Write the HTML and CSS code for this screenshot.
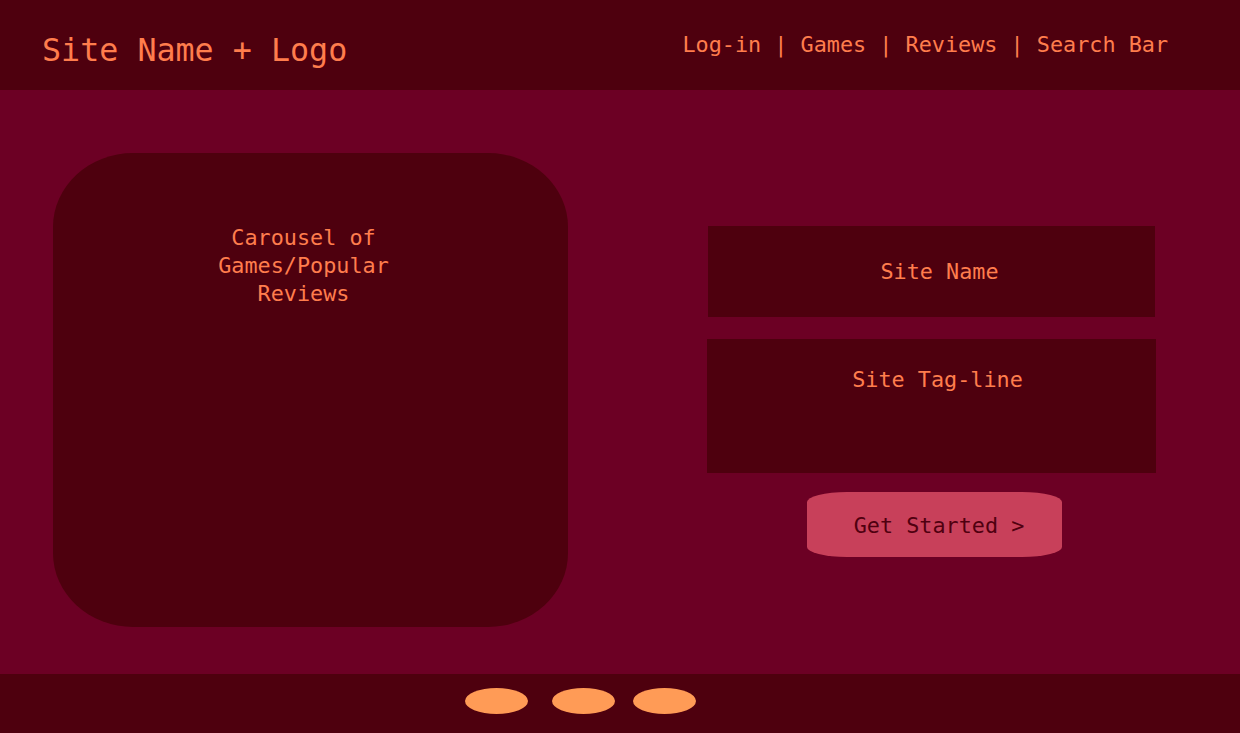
FILE: index.html
```html
<!DOCTYPE html>
<html lang="en">
<head>
<meta charset="utf-8">
<title>Site Name</title>
<link rel="stylesheet" href="styles.css">
</head>
<body>
<div class="page">
  <header class="header">
    <div class="brand">Site Name + Logo</div>
    <nav class="nav">Log-in | Games | Reviews | Search Bar</nav>
  </header>
  <main class="main">
    <section class="carousel">
      <p class="carousel-text">Carousel of Games/Popular Reviews</p>
    </section>
    <section class="hero">
      <div class="hero-name">Site Name</div>
      <div class="hero-tagline">Site Tag-line</div>
      <button class="cta">Get Started &gt;</button>
    </section>
  </main>
  <footer class="footer">
    <span class="dot"></span>
    <span class="dot dot-2"></span>
    <span class="dot dot-3"></span>
  </footer>
</div>
</body>
</html>
```
FILE: styles.css
```css
* { box-sizing: border-box; }
html, body { margin: 0; padding: 0; }
body {
  font-family: "DejaVu Sans Mono", "Liberation Mono", monospace;
  color: #ff7d4d;
  background: #6c0024;
}
.page {
  height: 733px;
  display: grid;
  grid-template-rows: 90px 584px 59px;
}
.header {
  background: #4e000e;
  display: flex;
  align-items: flex-start;
  padding: 30px 72px 0 43px;
}
.brand {
  font-size: 31.7px;
  line-height: 40px;
  margin-left: -1px;
}
.nav {
  margin-left: auto;
  margin-top: 0;
  font-size: 21.8px;
  line-height: 30px;
  white-space: pre;
}
.main {
  background: #6c0024;
  display: flex;
  align-items: flex-start;
  padding: 63px 0 0 53px;
}
.carousel {
  width: 515px;
  height: 474px;
  background: #4e000e;
  border-radius: 80px / 74px;
  padding: 71px 14px 0 0;
}
.carousel-text {
  margin: 0 auto;
  max-width: 220px;
  text-align: center;
  font-size: 21.8px;
  line-height: 28px;
}
.hero {
  margin-left: 139px;
  margin-top: 73px;
  width: 449px;
  display: flex;
  flex-direction: column;
  align-items: flex-start;
}
.hero-name {
  width: 447px;
  margin-left: 1px;
  height: 91px;
  background: #4e000e;
  padding: 32px 0 0 16px;
  text-align: center;
  font-size: 21.8px;
  line-height: 28px;
}
.hero-tagline {
  width: 449px;
  height: 134px;
  margin-top: 22px;
  background: #4e000e;
  padding: 27px 0 0 12px;
  text-align: center;
  font-size: 21.8px;
  line-height: 28px;
}
.cta {
  margin-top: 19px;
  margin-left: 100px;
  width: 255px;
  height: 65px;
  border: none;
  background: #c8405a;
  color: #500010;
  border-radius: 40px / 10px;
  font-family: inherit;
  font-size: 21.8px;
  line-height: 28px;
  padding: 2px 0 0 9px;
  text-align: center;
}
.footer {
  background: #4e000e;
  display: flex;
  align-items: flex-start;
  padding: 14px 0 0 465px;
}
.dot {
  width: 63px;
  height: 26px;
  border-radius: 50%;
  background: #ff9b56;
}
.dot-2 { margin-left: 24px; }
.dot-3 { margin-left: 18px; }
```
